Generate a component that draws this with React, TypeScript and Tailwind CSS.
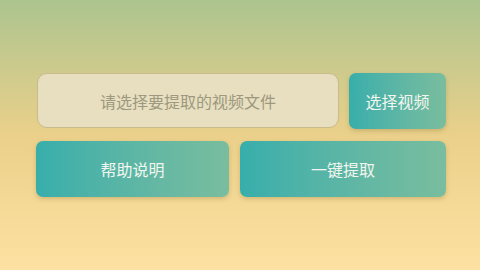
export default function App() {
    return (
        <div
            className="w-[480px] h-[270px] flex items-center justify-center bg-gradient-to-b from-[#acc48f] via-[#ead08a] to-[#fde1a2]"
            style={{ fontFamily: '"Noto Sans CJK SC", "Noto Sans", sans-serif' }}
        >
            <div className="w-[410px] flex flex-col gap-[12px] translate-x-[1px]">
                {/* top row: file path + pick button */}
                <div className="flex gap-[10px] pl-[1px]">
                    <div className="flex-1 h-[55px] rounded-[10px] border border-[#c8bc8c] bg-[#e7dfbf] flex items-center justify-center text-[16px] text-[#9e9880]">
                        请选择要提取的视频文件
                    </div>
                    <button className="w-[97px] h-[56px] rounded-[7px] bg-gradient-to-r from-[#37aeab] to-[#79bd9e] text-[#f2f6ef] text-[16px] shadow-[0_2px_4px_rgba(150,120,60,0.35)]">
                        选择视频
                    </button>
                </div>

                {/* bottom row */}
                <div className="flex gap-[11px]">
                    <button className="w-[193px] h-[56px] rounded-[7px] bg-gradient-to-r from-[#37aeab] to-[#79bd9e] text-[#f2f6ef] text-[16px] shadow-[0_2px_4px_rgba(150,120,60,0.35)]">
                        帮助说明
                    </button>
                    <button className="flex-1 h-[56px] rounded-[7px] bg-gradient-to-r from-[#37aeab] to-[#79bd9e] text-[#f2f6ef] text-[16px] shadow-[0_2px_4px_rgba(150,120,60,0.35)]">
                        一键提取
                    </button>
                </div>
            </div>
        </div>
    )
}
